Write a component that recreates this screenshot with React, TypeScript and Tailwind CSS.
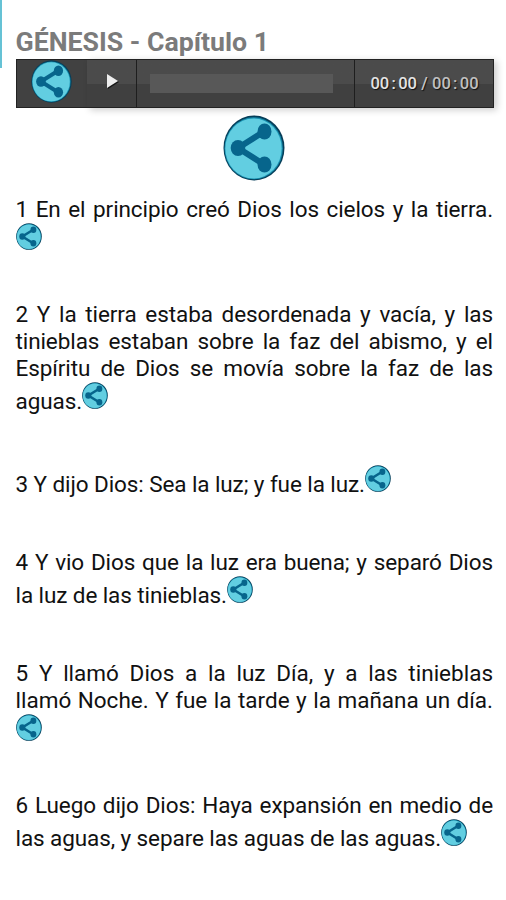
import { clsx } from 'clsx';

type Verse = {
  text: string;
  className: string;
};

const verses: Verse[] = [
  { text: '1 En el principio creó Dios los cielos y la tierra.', className: 'mb-[44px] tracking-[-0.09px]' },
  {
    text: '2 Y la tierra estaba desordenada y vacía, y las tinieblas estaban sobre la faz del abismo, y el Espíritu de Dios se movía sobre la faz de las aguas.',
    className: 'mb-[49px] tracking-[-0.09px]',
  },
  { text: '3 Y dijo Dios: Sea la luz; y fue la luz.', className: 'mb-[51px] tracking-[-0.09px]' },
  {
    text: '4 Y vio Dios que la luz era buena; y separó Dios la luz de las tinieblas.',
    className: 'mb-[50px] tracking-[-0.09px]',
  },
  {
    text: '5 Y llamó Dios a la luz Día, y a las tinieblas llamó Noche. Y fue la tarde y la mañana un día.',
    className: 'mb-[44px] tracking-[0px]',
  },
  {
    text: '6 Luego dijo Dios: Haya expansión en medio de las aguas, y separe las aguas de las aguas.',
    className: 'tracking-[-0.09px]',
  },
];

const ShareIcon = ({ className }: { className: string }) => (
  <svg viewBox="0 0 62 66" preserveAspectRatio="none" className={className} aria-label="Compartir">
    <ellipse cx="31" cy="33" rx="30.5" ry="32.5" fill="#063e59" />
    <ellipse cx="30.7" cy="33.3" rx="29.2" ry="31" fill="#168eae" />
    <ellipse cx="30.5" cy="33.5" rx="28.2" ry="30" fill="#62cee1" />
    <path d="M41 16.500L15 33L41 49.500" fill="none" stroke="#07658c" strokeWidth="6" />
    <ellipse cx="41.500" cy="16.500" rx="7" ry="8" fill="#07658c" />
    <ellipse cx="15" cy="33" rx="7.300" ry="8" fill="#07658c" />
    <ellipse cx="41.500" cy="49.500" rx="7" ry="8" fill="#07658c" />
  </svg>
);

const Digits = ({ className }: { className: string }) => (
  <span className={clsx('flex', className)}>
    <span>00</span>
    <span className="w-[9px] text-center">:</span>
    <span>00</span>
  </span>
);

const AudioPlayer = () => (
  <div className="flex h-[49px] w-[478px]">
    <div className="w-[71px] border border-r-0 border-[#222] bg-[#414141] pl-[14px]">
      <ShareIcon className="h-[43px] w-[41px]" />
    </div>
    <div className="flex flex-1 border border-l-0 border-[#222] bg-linear-to-b from-[#4b4b4b] from-50% to-[#404040] to-50% shadow-[3px_2px_7px_rgba(0,0,0,0.2)]">
      <button className="flex w-[50px] items-center justify-center border-r border-[#1e1e1e]" aria-label="Reproducir">
        <svg viewBox="0 0 12 15" className="mb-[4px] ml-[4px] h-[15px] w-3">
          <path d="M1 2L12 8L1 15Z" fill="#161616" />
          <path d="M0 0L11 7L0 14Z" fill="#eee" />
        </svg>
      </button>
      <div className="w-[218px] border-r border-[#1e1e1e] pt-[14px] pl-[13px]">
        <div className="h-[19px] w-[183px] bg-[#585858]" />
      </div>
      <div className="flex flex-1 items-center justify-center pt-[1px] pl-[2px] text-[16.5px] font-medium [text-shadow:1px_1px_1px_#111]">
        <Digits className="text-[#e4e4e4]" />
        <span className="w-[15px] text-center text-[#c8c8c8]">/</span>
        <Digits className="text-[#c0c0c0]" />
      </div>
    </div>
  </div>
);

export default function App() {
  return (
    <div className="relative h-[900px] w-[506px] overflow-hidden bg-white pt-[26px] pr-[13px] pl-[15.5px] font-['Roboto',sans-serif] text-[#111]">
      <div className="absolute top-0 left-0 h-[68px] w-[2px] bg-[#65c2d5]" />
      <h1 className="h-[33px] text-[26.7px] leading-[33px] font-bold whitespace-nowrap text-[#7b7b7b]">
        GÉNESIS - Capítulo 1
      </h1>
      <AudioPlayer />
      <div className="flex h-[88px] justify-center pt-[7px]">
        <ShareIcon className="h-[66px] w-[62px]" />
      </div>
      {verses.map((verse) => (
        <p key={verse.text} className={clsx('text-justify text-[22.5px] leading-[27.3px]', verse.className)}>
          {verse.text}
          <wbr />
          <ShareIcon className="inline-block h-[27px] w-[26px] align-baseline" />
        </p>
      ))}
    </div>
  );
}
